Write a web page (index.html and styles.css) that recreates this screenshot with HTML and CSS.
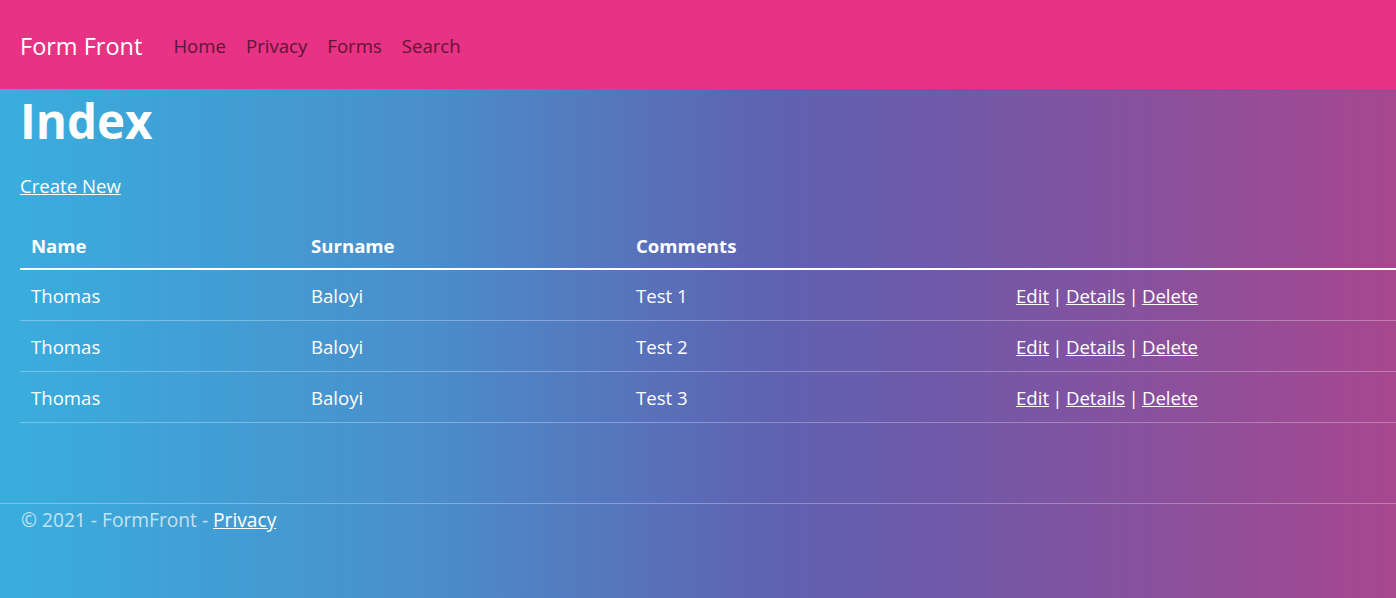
FILE: index.html
```html
<!DOCTYPE html>
<html lang="en">
<head>
<meta charset="utf-8">
<title>Index - FormFront</title>
<link rel="stylesheet" href="styles.css">
</head>
<body>
<header class="navbar">
  <a class="brand" href="#">Form Front</a>
  <nav class="nav">
    <a href="#">Home</a>
    <a href="#">Privacy</a>
    <a href="#">Forms</a>
    <a href="#">Search</a>
  </nav>
</header>
<main class="content">
  <h1 class="title">Index</h1>
  <p class="create"><a href="#">Create New</a></p>
  <table class="table">
    <thead>
      <tr><th class="c1">Name</th><th class="c2">Surname</th><th class="c3">Comments</th><th></th></tr>
    </thead>
    <tbody>
      <tr><td>Thomas</td><td>Baloyi</td><td>Test 1</td><td class="actions"><a href="#">Edit</a> | <a href="#">Details</a> | <a href="#">Delete</a></td></tr>
      <tr><td>Thomas</td><td>Baloyi</td><td>Test 2</td><td class="actions"><a href="#">Edit</a> | <a href="#">Details</a> | <a href="#">Delete</a></td></tr>
      <tr><td>Thomas</td><td>Baloyi</td><td>Test 3</td><td class="actions"><a href="#">Edit</a> | <a href="#">Details</a> | <a href="#">Delete</a></td></tr>
    </tbody>
  </table>
</main>
<footer class="footer">
  <div class="footer-inner">&copy; 2021 - FormFront - <a href="#">Privacy</a></div>
</footer>
</body>
</html>
```

FILE: styles.css
```css
* { box-sizing: border-box; }
html, body { margin: 0; padding: 0; }
body {
  min-height: 598px;
  font-family: "Segoe UI", "Open Sans", sans-serif;
  font-size: 18.6px;
  line-height: 30px;
  color: #fff;
  background: linear-gradient(to right, #39aede 0%, #4a8fcb 30%, #5f62b2 55%, #7059a8 68%, #a7478f 100%);
}
a { color: #fff; }

.navbar {
  height: 89px;
  background: #e83283;
  display: flex;
  align-items: center;
  padding: 2px 20px 0;
}
.brand {
  font-size: 23.5px;
  color: #fff;
  text-decoration: none;
  margin-right: 21px;
}
.nav { display: flex; }
.nav a {
  color: #601538;
  text-decoration: none;
  padding: 0 10px;
}

.content { padding: 2px 0 0 20px; }
.title {
  margin: 0 0 20px;
  font-size: 47.5px;
  line-height: 60px;
  font-weight: 700;
}
.create { margin: 0 0 20px; }

.table {
  width: 100%;
  border-collapse: collapse;
}
.table th, .table td {
  text-align: left;
  padding: 10px 11px;
  vertical-align: top;
}
.table th { font-weight: 700; padding-bottom: 7px; }
.table td { padding-top: 11px; padding-bottom: 9px; }
.table thead tr { border-bottom: 2px solid #fff; }
.table tbody tr { border-bottom: 1px solid rgba(255,255,255,0.3); }
.c1 { width: 280px; }
.c2 { width: 325px; }
.c3 { width: 380px; }
.actions { word-spacing: -1.5px; }

.footer {
  margin-top: 80px;
  border-top: 1px solid rgba(255,255,255,0.3);
}
.footer-inner {
  padding: 1px 21px;
  font-size: 19.2px;
  color: rgba(255,255,255,0.7);
}
```
